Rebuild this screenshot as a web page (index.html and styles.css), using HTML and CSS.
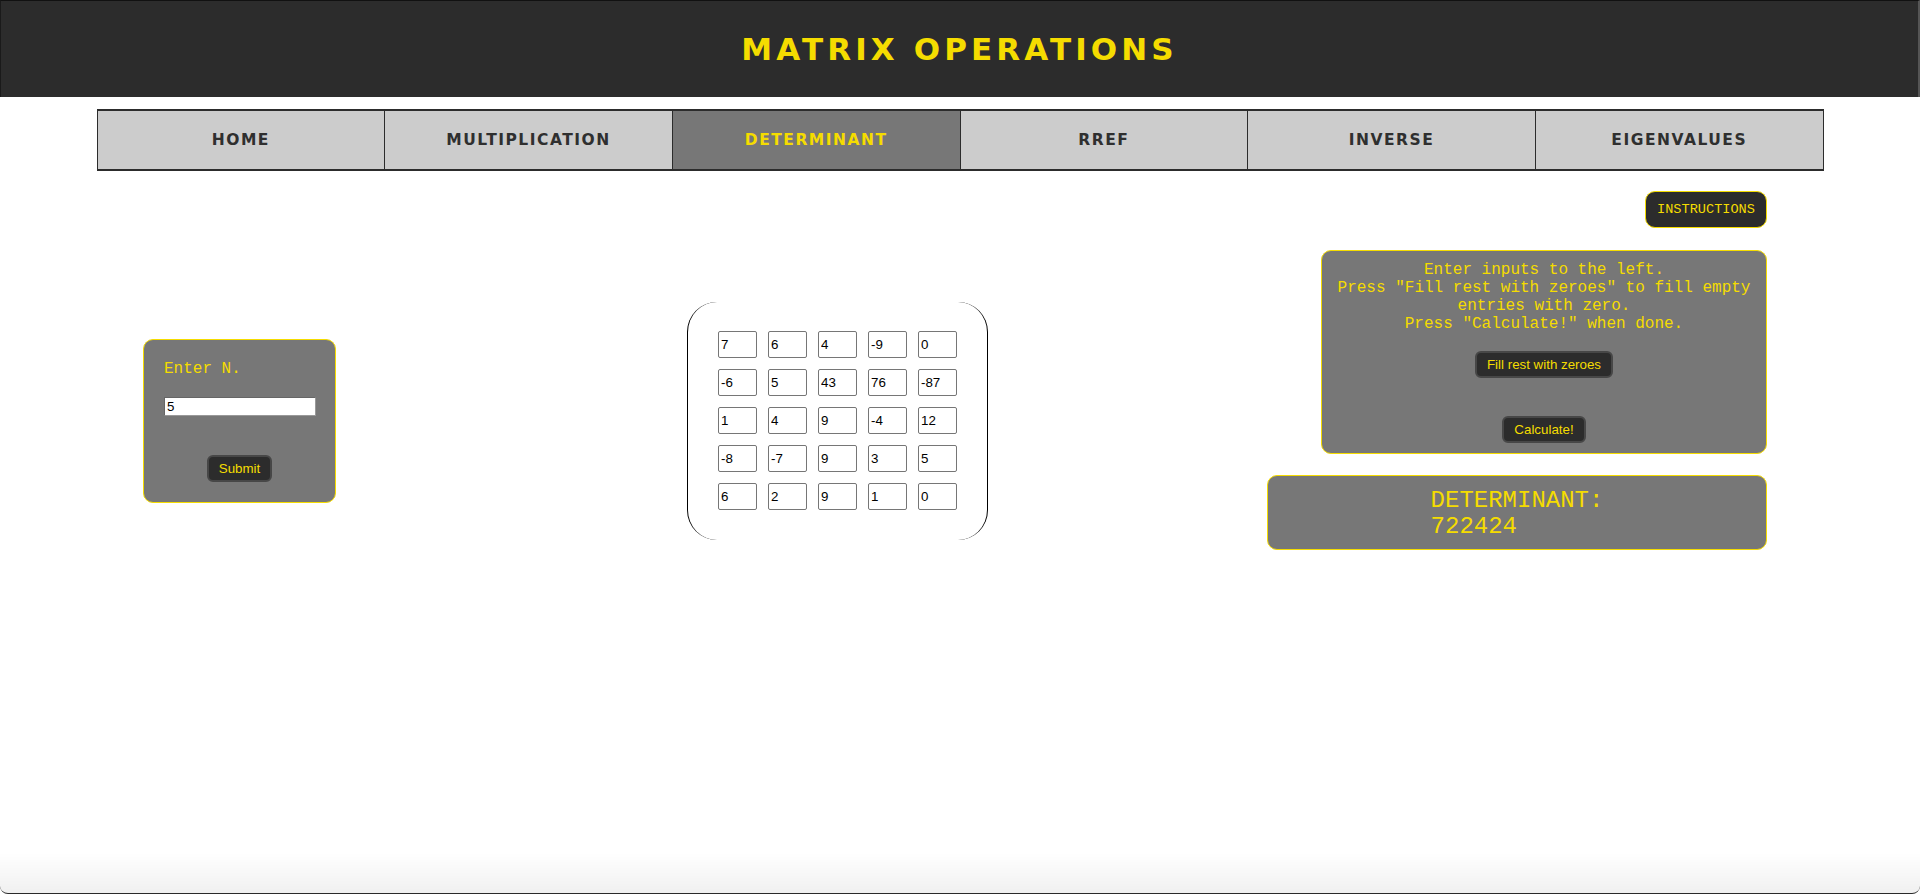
FILE: index.html
```html
<!DOCTYPE html>
<html lang="en">
<head>
<meta charset="utf-8">
<title>Matrix Operations - Determinant</title>
<link rel="stylesheet" href="styles.css">
</head>
<body>
<header class="site-header">
  <h1 class="site-title">MATRIX OPERATIONS</h1>
</header>
<nav class="tabs">
  <a class="tab" href="#">HOME</a>
  <a class="tab" href="#">MULTIPLICATION</a>
  <a class="tab tab-active" href="#">DETERMINANT</a>
  <a class="tab" href="#">RREF</a>
  <a class="tab" href="#">INVERSE</a>
  <a class="tab" href="#">EIGENVALUES</a>
</nav>
<main class="workspace">
  <section class="size-card">
    <p class="size-label">Enter N.</p>
    <input class="size-input" type="text" value="5">
    <div class="center-row"><button class="btn">Submit</button></div>
  </section>
  <section class="matrix">
    <input class="cell" type="text" value="7">
    <input class="cell" type="text" value="6">
    <input class="cell" type="text" value="4">
    <input class="cell" type="text" value="-9">
    <input class="cell" type="text" value="0">
    <input class="cell" type="text" value="-6">
    <input class="cell" type="text" value="5">
    <input class="cell" type="text" value="43">
    <input class="cell" type="text" value="76">
    <input class="cell" type="text" value="-87">
    <input class="cell" type="text" value="1">
    <input class="cell" type="text" value="4">
    <input class="cell" type="text" value="9">
    <input class="cell" type="text" value="-4">
    <input class="cell" type="text" value="12">
    <input class="cell" type="text" value="-8">
    <input class="cell" type="text" value="-7">
    <input class="cell" type="text" value="9">
    <input class="cell" type="text" value="3">
    <input class="cell" type="text" value="5">
    <input class="cell" type="text" value="6">
    <input class="cell" type="text" value="2">
    <input class="cell" type="text" value="9">
    <input class="cell" type="text" value="1">
    <input class="cell" type="text" value="0">
  </section>
  <aside class="side">
    <button class="instructions-btn">INSTRUCTIONS</button>
    <div class="instructions">
      <p class="instructions-text">Enter inputs to the left.<br>Press "Fill rest with zeroes" to fill empty entries with zero.<br>Press "Calculate!" when done.</p>
      <div class="center-row fill-row"><button class="btn">Fill rest with zeroes</button></div>
      <div class="center-row calc-row"><button class="btn">Calculate!</button></div>
    </div>
    <div class="result">
      <div class="result-text">DETERMINANT:<br>722424</div>
    </div>
  </aside>
</main>
<div class="window-shade"></div>
</body>
</html>
```
FILE: styles.css
```css
html, body {
  margin: 0;
  padding: 0;
  background: #ffffff;
}

body {
  font-family: "Liberation Sans", Arial, sans-serif;
  min-height: 894px;
}

.site-header {
  box-sizing: border-box;
  height: 97px;
  background: #2c2c2c;
  border-top: 1px solid #111111;
  border-left: 1px solid #1a1a1a;
  border-right: 2px solid #555555;
  display: flex;
  align-items: center;
  justify-content: center;
}

.site-title {
  margin: 0;
  font-family: "DejaVu Sans", sans-serif;
  font-weight: bold;
  font-size: 31px;
  letter-spacing: 4.1px;
  color: #f5dc00;
}

.tabs {
  box-sizing: border-box;
  width: 1727px;
  height: 62px;
  margin: 12px auto 0;
  display: flex;
  border: 1px solid #2c2c2c;
  border-top-width: 2px;
  border-bottom-width: 2px;
}

.tab {
  flex: 1;
  display: flex;
  align-items: center;
  justify-content: center;
  background: #cccccc;
  color: #2f2f2f;
  text-decoration: none;
  font-family: "DejaVu Sans", sans-serif;
  font-weight: bold;
  font-size: 15.5px;
  letter-spacing: 1.5px;
  border-right: 1px solid #2c2c2c;
}

.tab:last-child {
  border-right: none;
}

.tab-active {
  background: #777777;
  color: #f5dc00;
}

.workspace {
  display: flex;
  align-items: flex-start;
  padding: 0 153px 0 143px;
  margin-top: 20px;
}

.size-card {
  box-sizing: border-box;
  width: 193px;
  height: 164px;
  margin-top: 148px;
  padding: 20px;
  background: #777777;
  border: 1px solid #f5dc00;
  border-radius: 10px;
}

.size-label {
  margin: 0;
  font-family: "Liberation Mono", "Courier New", monospace;
  font-size: 16px;
  color: #f5dc00;
}

.size-input {
  display: block;
  box-sizing: border-box;
  width: 152px;
  height: 19px;
  margin: 19px 0 0;
  padding: 1px 2px;
  border: 1px solid #666666;
  border-right-color: #999999;
  border-bottom-color: #999999;
  background: #ffffff;
  font-family: "Liberation Sans", Arial, sans-serif;
  font-size: 13.33px;
  color: #000000;
}

.center-row {
  display: flex;
  justify-content: center;
}

.size-card .center-row {
  margin-top: 39px;
}

.btn {
  box-sizing: border-box;
  height: 27px;
  padding: 0 10px;
  background: #2c2c2c;
  color: #f5dc00;
  border: 2px solid #474747;
  border-radius: 6px;
  font-family: "Liberation Sans", Arial, sans-serif;
  font-size: 13.33px;
}

.matrix {
  box-sizing: border-box;
  width: 301px;
  margin-top: 111px;
  margin-left: 351px;
  padding: 29px 30px 30px;
  border-left: 1px solid #000000;
  border-right: 1px solid #000000;
  border-radius: 30px;
  display: grid;
  grid-template-columns: repeat(5, 39px);
  grid-auto-rows: 27px;
  column-gap: 11px;
  row-gap: 11px;
}

.cell {
  box-sizing: border-box;
  width: 39px;
  height: 27px;
  margin: 0;
  padding: 0 2px;
  border: 1px solid #767676;
  border-radius: 2px;
  background: #ffffff;
  font-family: "Liberation Sans", Arial, sans-serif;
  font-size: 13.33px;
  color: #000000;
}

.side {
  margin-left: auto;
  width: 500px;
  display: flex;
  flex-direction: column;
  align-items: flex-end;
}

.instructions-btn {
  box-sizing: border-box;
  width: 122px;
  height: 37px;
  padding: 0;
  background: #2c2c2c;
  color: #f5dc00;
  border: 1px solid #f5dc00;
  border-radius: 10px;
  font-family: "Liberation Mono", "Courier New", monospace;
  font-size: 13.6px;
}

.instructions {
  box-sizing: border-box;
  width: 446px;
  height: 204px;
  margin-top: 22px;
  padding: 10px 10px 0;
  background: #777777;
  border: 1px solid #f5dc00;
  border-radius: 10px;
}

.instructions-text {
  margin: 0;
  text-align: center;
  font-family: "Liberation Mono", "Courier New", monospace;
  font-size: 16px;
  color: #f5dc00;
}

.fill-row {
  margin-top: 18px;
}

.calc-row {
  margin-top: 38px;
}

.result {
  box-sizing: border-box;
  width: 500px;
  height: 75px;
  margin-top: 21px;
  padding: 12px 0 9px;
  background: #777777;
  border: 1px solid #f5dc00;
  border-radius: 10px;
  display: flex;
  justify-content: center;
}

.result-text {
  font-family: "Liberation Mono", "Courier New", monospace;
  font-size: 24px;
  line-height: 26px;
  color: #f5dc00;
  text-align: left;
}

.window-shade {
  position: fixed;
  left: 0;
  right: 0;
  bottom: 0;
  height: 40px;
  pointer-events: none;
  background: linear-gradient(to bottom, rgba(0, 0, 0, 0), rgba(0, 0, 0, 0.06));
  border-bottom: 1px solid #2a2a2a;
  border-radius: 0 0 8px 8px;
}
```
